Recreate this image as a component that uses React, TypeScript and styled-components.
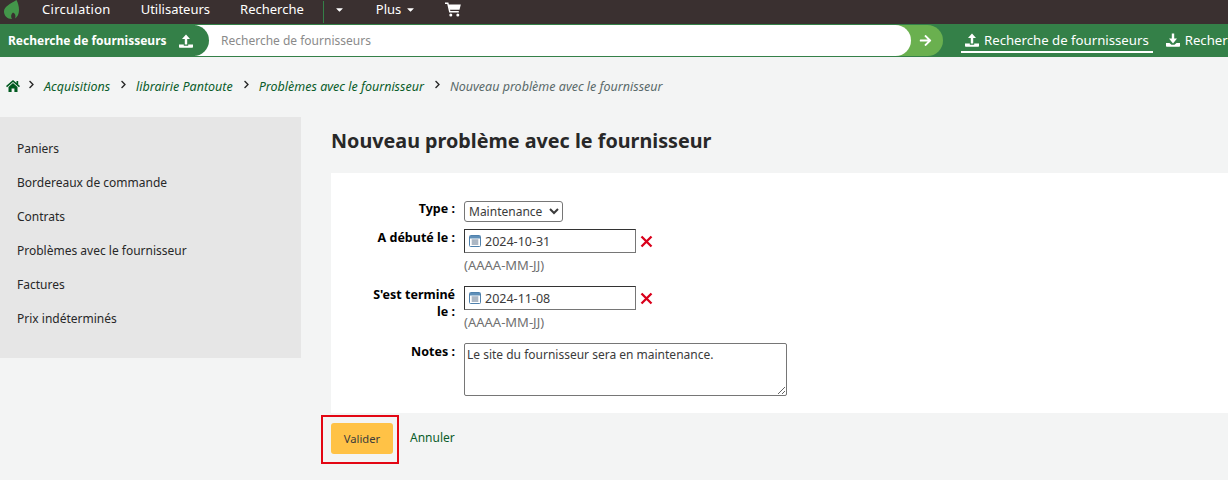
import React from "react";
import styled, { createGlobalStyle } from "styled-components";
import { FaCaretDown, FaArrowRight, FaChevronRight } from "react-icons/fa";

const GlobalStyle = createGlobalStyle`
  html, body {
    margin: 0;
    padding: 0;
    background: #f3f4f4;
    overflow: hidden;
  }
  body {
    font-family: "Noto Sans", sans-serif;
    font-size: 12px;
    color: #282828;
  }
`;

const Leaf = () => (
  <svg width="15" height="19" viewBox="0 0 15 19">
    <path d="M12.500 0C14 3 15 6 15 10c0 4-1.500 7-4 8.500 1-2.500.5-5-2-6-2 1.500-2.500 4-1 6.500C3 19 0 15.500 0 11.500 0 6.500 6 4 12.500 0z" fill="#43964a" />
  </svg>
);

const UploadIcon = () => (
  <svg width="14" height="14" viewBox="0 0 14 14" fill="#fff">
    <path d="M7 0.500L11 5H8.200V10.500H5.800V5H3z" />
    <path d="M0 10.500H4.800V11.700H9.200V10.500H14V13a.8.8 0 0 1-.8.8H.8A.8.8 0 0 1 0 13z" />
  </svg>
);

const DownloadIcon = () => (
  <svg width="14" height="14" viewBox="0 0 14 14" fill="#fff">
    <path d="M5.800 0.500H8.200V5.500H11L7 10.500L3 5.500H5.800z" />
    <path d="M0 10H3.500L5.500 11.700H8.500L10.500 10H14V13a.8.8 0 0 1-.8.8H.8A.8.8 0 0 1 0 13z" />
  </svg>
);

const CartIcon = () => (
  <svg width="16" height="15" viewBox="0 0 16 15">
    <path d="M0 1.200H2.800L4.800 9.800H13.800" stroke="#fff" strokeWidth="1.500" fill="none" />
    <path d="M3.300 2.500H15.800L14.500 7.800H4.500z" fill="#fff" />
    <circle cx="5.800" cy="13" r="1.500" fill="#fff" />
    <circle cx="12.800" cy="13" r="1.500" fill="#fff" />
  </svg>
);

const HomeIcon = () => (
  <svg width="14" height="12" viewBox="0 0 14 12" fill="currentColor">
    <path d="M7 0L10.500 3V1H12.200V4.500L14 6.100L13 7.200L7 2L1 7.200L0 6.100z" />
    <path d="M2.500 7L7 3L11.500 7V12H8.400V8.500H5.600V12H2.500z" />
  </svg>
);

const CalendarIcon = () => (
  <svg width="12" height="12" viewBox="0 0 12 12">
    <rect x="0.500" y="0.500" width="11" height="11" rx="1" fill="#fff" stroke="#4f81ad" />
    <rect x="1" y="1" width="10" height="2.500" fill="#5f8fb8" />
    <path d="M2.500 5h7M2.500 7h7M2.500 9h7M4 4.500v5.500M6 4.500v5.500M8 4.500v5.500" stroke="#7d8fa3" strokeWidth="0.8" fill="none" />
  </svg>
);

const CrossIcon = () => (
  <svg width="13" height="13" viewBox="0 0 13 13">
    <path d="M1.500 1.500L11.500 11.500M11.500 1.500L1.500 11.500" stroke="currentColor" strokeWidth="2.300" fill="none" />
  </svg>
);

const App = () => {
  return (
    <>
      <GlobalStyle />
      <TopNav>
        <LogoSlot>
          <Leaf />
        </LogoSlot>
        <FirstNavLink>Circulation</FirstNavLink>
        <NavLink>Utilisateurs</NavLink>
        <NavLink>Recherche</NavLink>
        <NavDivider />
        <NavCaret>
          <FaCaretDown size={11} />
        </NavCaret>
        <NavLink>
          Plus <FaCaretDown size={11} />
        </NavLink>
        <NavCart>
          <CartIcon />
        </NavCart>
      </TopNav>
      <SearchBar>
        <SearchLabel>
          Recherche de fournisseurs
          <UploadIcon />
        </SearchLabel>
        <SearchField>
          <SearchInput>Recherche de fournisseurs</SearchInput>
          <SearchGo>
            <FaArrowRight size={13} />
          </SearchGo>
        </SearchField>
        <SearchTab $active>
          <UploadIcon />
          Recherche de fournisseurs
        </SearchTab>
        <SearchTab>
          <DownloadIcon />
          Recherche de commandes
        </SearchTab>
      </SearchBar>
      <Breadcrumbs>
        <HomeLink>
          <HomeIcon />
        </HomeLink>
        <Sep $first>
          <FaChevronRight size={9} />
        </Sep>
        <Crumb>Acquisitions</Crumb>
        <Sep>
          <FaChevronRight size={9} />
        </Sep>
        <Crumb>librairie Pantoute</Crumb>
        <Sep>
          <FaChevronRight size={9} />
        </Sep>
        <Crumb>Problèmes avec le fournisseur</Crumb>
        <Sep>
          <FaChevronRight size={9} />
        </Sep>
        <Crumb $current>Nouveau problème avec le fournisseur</Crumb>
      </Breadcrumbs>
      <Main>
        <Sidebar>
          <SideLink>Paniers</SideLink>
          <SideLink>Bordereaux de commande</SideLink>
          <SideLink>Contrats</SideLink>
          <SideLink>Problèmes avec le fournisseur</SideLink>
          <SideLink>Factures</SideLink>
          <SideLink>Prix indéterminés</SideLink>
        </Sidebar>
        <Content>
          <Title>Nouveau problème avec le fournisseur</Title>
          <FormCard>
            <Row $height={29}>
              <Label>Type :</Label>
              <Select defaultValue="Maintenance">
                <option>Maintenance</option>
              </Select>
            </Row>
            <Row $height={57}>
              <Label>A débuté le :</Label>
              <DateCol>
                <DateLine>
                  <DateBox>
                    <CalendarIcon />
                    2024-10-31
                  </DateBox>
                  <Clear>
                    <CrossIcon />
                  </Clear>
                </DateLine>
                <Hint>(AAAA-MM-JJ)</Hint>
              </DateCol>
            </Row>
            <Row $height={57}>
              <Label>S'est terminé le :</Label>
              <DateCol>
                <DateLine>
                  <DateBox>
                    <CalendarIcon />
                    2024-11-08
                  </DateBox>
                  <Clear>
                    <CrossIcon />
                  </Clear>
                </DateLine>
                <Hint>(AAAA-MM-JJ)</Hint>
              </DateCol>
            </Row>
            <Row $height={53}>
              <Label>Notes :</Label>
              <Notes defaultValue="Le site du fournisseur sera en maintenance." />
            </Row>
          </FormCard>
          <Actions>
            <Highlight>
              <SubmitButton>Valider</SubmitButton>
            </Highlight>
            <CancelLink>Annuler</CancelLink>
          </Actions>
        </Content>
      </Main>
    </>
  );
};

const TopNav = styled.div`
  height: 24px;
  box-sizing: border-box;
  padding-bottom: 6px;
  background-color: #3a3030;
  display: flex;
  align-items: center;
  color: #fff;
  font-size: 13px;
  overflow: hidden;
`;

const LogoSlot = styled.div`
  width: 42px;
  padding-left: 4px;
  box-sizing: border-box;
  display: flex;
  align-items: center;
`;

const NavLink = styled.div`
  margin-right: 30px;
  display: flex;
  align-items: center;
  gap: 4px;
  white-space: nowrap;
`;

const FirstNavLink = styled(NavLink)`
  letter-spacing: 0.28px;
`;

const NavDivider = styled.div`
  width: 1px;
  height: 22px;
  flex: none;
  margin-top: 6px;
  background-color: #348048;
  margin-left: -11px;
`;

const NavCaret = styled.div`
  width: 40px;
  display: flex;
  padding-left: 10px;
  box-sizing: border-box;
  margin-right: 12px;
`;

const NavCart = styled.div`
  display: flex;
  margin-left: -1px;
`;

const SearchBar = styled.div`
  height: 33px;
  background-color: #348048;
  display: flex;
  align-items: center;
  color: #fff;
  white-space: nowrap;
  overflow: hidden;
`;

const SearchLabel = styled.div`
  width: 209px;
  height: 31px;
  flex: none;
  box-sizing: border-box;
  padding-left: 8px;
  border-radius: 0 16px 16px 0;
  background-color: #348048;
  display: flex;
  align-items: center;
  gap: 12px;
  font-weight: 700;
  position: relative;
  z-index: 1;
  margin-right: -14px;
`;

const SearchField = styled.div`
  width: 748px;
  height: 31px;
  flex: none;
  border-radius: 0 16px 16px 0;
  background-color: #6ab04f;
  display: flex;
  align-items: center;
`;

const SearchInput = styled.div`
  width: 716px;
  height: 31px;
  box-sizing: border-box;
  padding-left: 26px;
  background-color: #fff;
  border-radius: 0 16px 16px 0;
  color: #8a8a8a;
  line-height: 31px;
`;

const SearchGo = styled.div`
  flex: 1;
  display: flex;
  padding-left: 8px;
`;

const SearchTab = styled.div<{ $active?: boolean }>`
  flex: none;
  height: 25px;
  display: flex;
  align-items: center;
  gap: 5px;
  font-size: 13.2px;
  padding: 0 4px;
  margin-left: ${(p) => (p.$active ? "18px" : "9px")};
  box-sizing: border-box;
  border-bottom: 2px solid ${(p) => (p.$active ? "#fff" : "transparent")};
`;

const Breadcrumbs = styled.div`
  height: 60px;
  box-sizing: border-box;
  padding: 0 0 2px 6px;
  display: flex;
  align-items: center;
  font-style: italic;
  font-size: 12.5px;
`;

const HomeLink = styled.div`
  color: #005a1f;
  display: flex;
`;

const Sep = styled.div<{ $first?: boolean }>`
  display: flex;
  color: #282828;
  margin: -4px 8px 0 ${(p) => (p.$first ? "7px" : "9px")};
`;

const Crumb = styled.div<{ $current?: boolean }>`
  color: ${(p) => (p.$current ? "#5a6a6a" : "#0a5c2a")};
`;

const Main = styled.div`
  display: flex;
`;

const Sidebar = styled.div`
  width: 301px;
  height: 241px;
  flex: none;
  box-sizing: border-box;
  padding-top: 15px;
  background-color: #e6e6e6;
`;

const SideLink = styled.div`
  height: 34px;
  line-height: 34px;
  padding-left: 17px;
  color: #282828;
`;

const Content = styled.div`
  flex: 1;
  padding-left: 30px;
`;

const Title = styled.h1`
  margin: 0;
  height: 56px;
  line-height: 48px;
  font-size: 19.75px;
  font-weight: 700;
  color: #282828;
`;

const FormCard = styled.div`
  height: 240px;
  box-sizing: border-box;
  padding-top: 27px;
  background-color: #fff;
`;

const Row = styled.div<{ $height: number }>`
  height: ${(p) => p.$height}px;
  display: flex;
  align-items: flex-start;
`;

const Label = styled.div`
  width: 90px;
  margin-left: 34px;
  margin-right: 9px;
  text-align: right;
  font-weight: 700;
  font-size: 12.5px;
  color: #000;
  line-height: 17px;
`;

const Select = styled.select`
  width: 99px;
  height: 21px;
  margin-top: 1px;
  font-family: "Noto Sans", sans-serif;
  font-size: 12px;
  color: #3b3b3b;
  padding: 0;
  background: #fff;
  border: 1px solid #767676;
  border-radius: 3px;
`;

const DateCol = styled.div`
  display: flex;
  flex-direction: column;
`;

const DateLine = styled.div`
  display: flex;
  align-items: center;
`;

const DateBox = styled.div`
  width: 172px;
  height: 24px;
  box-sizing: border-box;
  border: 1px solid #767676;
  border-top-color: #333;
  border-left-color: #333;
  display: flex;
  align-items: center;
  gap: 4px;
  padding-left: 4px;
  color: #3b3b3b;
  font-size: 12.5px;
  background: #fff;
`;

const Clear = styled.div`
  display: flex;
  color: #d9001b;
  margin-left: 4px;
`;

const Hint = styled.div`
  color: #707070;
  font-size: 13px;
  line-height: 16px;
  margin-top: 4px;
`;

const Notes = styled.textarea`
  width: 323px;
  height: 53px;
  box-sizing: border-box;
  padding: 2px;
  font-family: "Noto Sans", sans-serif;
  font-size: 12px;
  color: #3b3b3b;
  border: 1px solid #767676;
  border-radius: 2px;
`;

const Actions = styled.div`
  display: flex;
  align-items: center;
  margin-left: -10px;
  margin-top: 2px;
`;

const Highlight = styled.div`
  box-sizing: border-box;
  width: 78px;
  height: 49px;
  border: 2px solid #e30613;
  padding: 6px 0 0 8px;
`;

const SubmitButton = styled.button`
  width: 62px;
  height: 31px;
  padding: 0;
  border: none;
  border-radius: 3px;
  background-color: #ffc246;
  color: #3b3b3b;
  font-family: "Noto Sans", sans-serif;
  font-size: 11.2px;
`;

const CancelLink = styled.div`
  color: #0a5c2a;
  margin-left: 11px;
  margin-top: -5px;
`;

export default App;
